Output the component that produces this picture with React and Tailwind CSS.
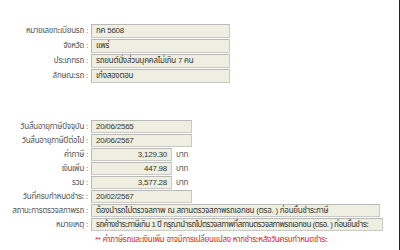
import React from "react";

const font = { fontFamily: '"Liberation Sans", "Noto Sans Thai", "Noto Sans", sans-serif' };

function Row({ label, children }) {
  return (
    <div className="flex items-center">
      <div className="w-[91px] shrink-0 flex justify-end pr-[3px] text-[#555555] whitespace-nowrap">
        <span>{label} :</span>
      </div>
      {children}
    </div>
  );
}

function Field({ w, right, tall, tight, children }) {
  return (
    <div
      className={`${w} ${tall ? "h-[14px]" : "h-[13px]"} flex items-center px-[4px] bg-[#efefe1] border border-[#c8c8c8] border-t-[#b8b8b8] border-l-[#b8b8b8] text-[#333333] whitespace-nowrap overflow-hidden ${
        right ? "justify-end" : ""
      } ${tight ? "tracking-[-0.5px]" : ""}`}
    >
      {children}
    </div>
  );
}

function Baht() {
  return <span className="ml-[4px] text-[#555555]">บาท</span>;
}

export default function App() {
  return (
    <div className="w-[400px] h-[250px] bg-white border-r border-[#222222] overflow-hidden text-[8px] leading-none tracking-[-0.25px]" style={font}>
      <div className="pt-[24px] flex flex-col gap-[1px]">
        <Row label="หมายเลขทะเบียนรถ">
          <Field w="w-[139px]" tall>กค 5608</Field>
        </Row>
        <Row label="จังหวัด">
          <Field w="w-[139px]" tall>แพร่</Field>
        </Row>
        <Row label="ประเภทรถ">
          <Field w="w-[139px]" tall>รถยนต์นั่งส่วนบุคคลไม่เกิน 7 คน</Field>
        </Row>
        <Row label="ลักษณะรถ">
          <Field w="w-[139px]" tall>เก๋งสองตอน</Field>
        </Row>
      </div>

      <div className="mt-[37px] flex flex-col gap-[1px]">
        <Row label="วันสิ้นอายุภาษีปัจจุบัน">
          <Field w="w-[101px]">20/06/2565</Field>
        </Row>
        <Row label="วันสิ้นอายุภาษีปีต่อไป">
          <Field w="w-[101px]">20/06/2567</Field>
        </Row>
        <Row label="ค่าภาษี">
          <Field w="w-[81px]" right>3,129.30</Field>
          <Baht />
        </Row>
        <Row label="เงินเพิ่ม">
          <Field w="w-[81px]" right>447.98</Field>
          <Baht />
        </Row>
        <Row label="รวม">
          <Field w="w-[81px]" right>3,577.28</Field>
          <Baht />
        </Row>
        <Row label="วันที่ครบกำหนดชำระ">
          <Field w="w-[101px]">20/02/2567</Field>
        </Row>
        <Row label="สถานะการตรวจสภาพรถ">
          <Field w="w-[289px]">ต้องนำรถไปตรวจสภาพ ณ สถานตรวจสภาพรถเอกชน (ตรอ. ) ก่อนยื่นชำระภาษี</Field>
        </Row>
        <Row label="หมายเหตุ">
          <Field w="w-[292px]" tight>รถค้างชำระภาษีเกิน 1 ปี กรุณานำรถไปตรวจสภาพที่สถานตรวจสภาพรถเอกชน (ตรอ. ) ก่อนยื่นชำระ</Field>
        </Row>
        <div className="ml-[95px] mt-[4px] text-[#dd2222] whitespace-nowrap">
          ** ค่าภาษีรถและเงินเพิ่ม อาจมีการเปลี่ยนแปลง หากชำระหลังวันครบกำหนดชำระ
        </div>
      </div>
    </div>
  );
}
